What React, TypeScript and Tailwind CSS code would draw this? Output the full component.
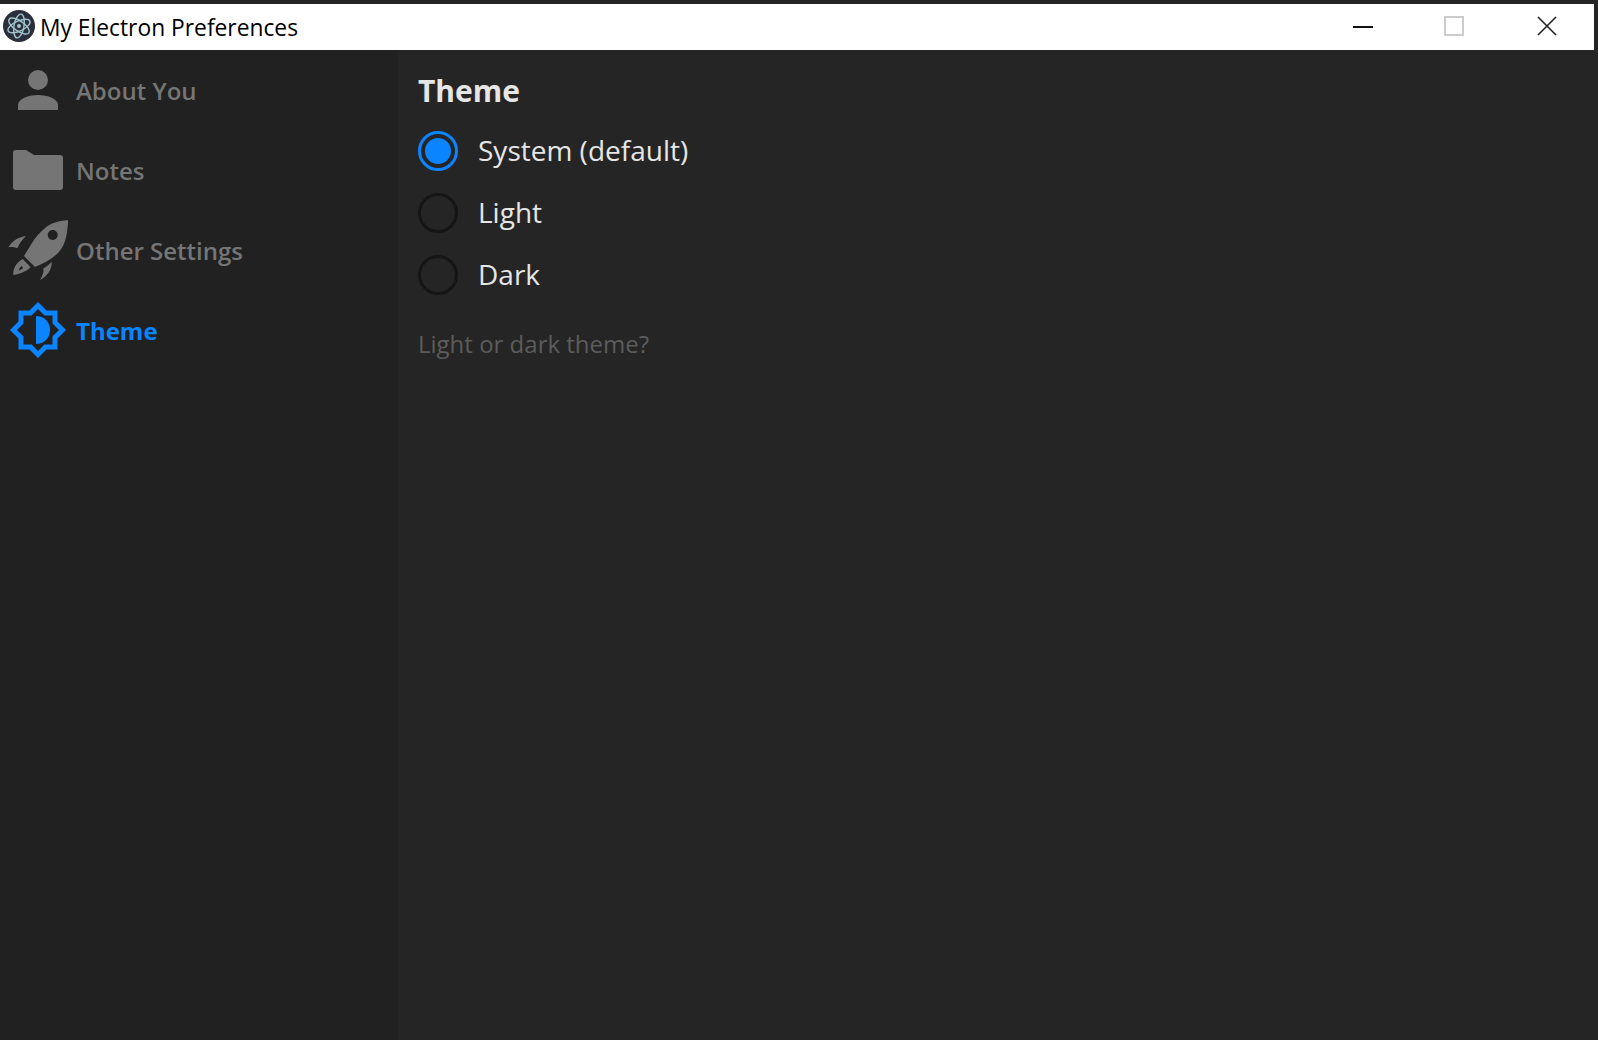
import React from "react";

const navItems = [
  { label: "About You", icon: UserIcon },
  { label: "Notes", icon: FolderIcon },
  { label: "Other Settings", icon: RocketIcon },
  { label: "Theme", icon: ThemeIcon, active: true },
];

const options = [
  { label: "System (default)", checked: true },
  { label: "Light" },
  { label: "Dark" },
];

function UserIcon() {
  return (
    <svg width="60" height="60" viewBox="0 0 60 60" fill="#757575">
      <circle cx="30" cy="20" r="10" />
      <path d="M10 50v-5c0-6 10-10 20-10s20 4 20 10v5z" />
    </svg>
  );
}

function FolderIcon() {
  return (
    <svg width="60" height="60" viewBox="0 0 60 60" fill="#757575">
      <path d="M5 13a3 3 0 0 1 3-3h10l8 5h26a3 3 0 0 1 3 3v29a3 3 0 0 1-3 3H8a3 3 0 0 1-3-3z" />
    </svg>
  );
}

function RocketIcon() {
  return (
    <svg width="60" height="60" viewBox="0 0 60 60" fill="#757575">
      <path
        fillRule="evenodd"
        d="M60.300 0C50 1 42 3 36 9c-5 4-9 9-12 14l-8 13 11 11c8-3 17-8 23-14 7-7 9-16 10.300-33zM44.700 10a5 5 0 1 1 0 10 5 5 0 0 1 0-10z"
      />
      <path d="M0.300 27.300C5 20 11 17 18 16c-4 4-7 8-8.700 12.300-3-1.300-6-1.500-9-1z" />
      <path
        fillRule="evenodd"
        d="M5.300 55C5 48 8 43 14.700 39l8 8.300C19 51 13 54 5.300 55zM13.700 46c-1.500 1-2.500 2.500-3 4.500 1.500-.4 3-1.200 4.300-2.500z"
      />
      <path d="M43.700 41.700C44 50 39 56 32 60c3-5 4-8 3.300-11.700 3-1.300 5.700-3.800 8.400-6.600z" />
    </svg>
  );
}

function ThemeIcon() {
  return (
    <svg width="60" height="60" viewBox="0 0 60 60">
      <path
        d="M30 5.500l7.500 7.500h9.500v9.500l7.500 7.500-7.500 7.500v9.500h-9.500l-7.500 7.500-7.500-7.500H13v-9.500L5.500 30l7.500-7.500V13h9.500z"
        fill="none"
        stroke="#0a84ff"
        strokeWidth="5"
      />
      <path d="M28 16c8 0 14 6 14 14s-6 14-14 14z" fill="#0a84ff" />
    </svg>
  );
}

function ElectronLogo() {
  return (
    <svg width="32" height="32" viewBox="0 0 32 32" fill="none">
      <circle cx="16" cy="16" r="16" fill="#2b2e3b" />
      <g stroke="#9fc4cc" strokeWidth="1.4">
        <ellipse cx="16" cy="16" rx="12" ry="5" transform="rotate(35 16 16)" />
        <ellipse cx="16" cy="16" rx="12" ry="5" transform="rotate(100 16 16)" />
        <ellipse cx="16" cy="16" rx="12" ry="5" transform="rotate(155 16 16)" />
      </g>
      <circle cx="16" cy="16" r="2" fill="#9fc4cc" />
    </svg>
  );
}

export default function App() {
  return (
    <div className="h-[1040px] w-[1598px] overflow-hidden bg-[#252525] font-['Open_Sans',sans-serif] pt-1 pr-1">
      {/* Title bar */}
      <div className="flex h-[46px] items-center bg-white">
        <div className="mb-[2px] ml-[3px]">
          <ElectronLogo />
        </div>
        <span className="ml-[5px] mt-[3px] text-[22.8px] text-black">My Electron Preferences</span>
        <div className="mb-[2px] ml-auto flex items-center">
          <svg width="20" height="20" viewBox="0 0 20 20" className="mr-[71px]">
            <rect x="0" y="10" width="20" height="2" fill="#111" />
          </svg>
          <div className="mr-[73px] h-5 w-5 border-2 border-[#cccccc]" />
          <svg width="20" height="20" viewBox="0 0 20 20" className="mr-[37px]">
            <path d="M1 1l18 18M19 1L1 19" stroke="#222" strokeWidth="1.6" />
          </svg>
        </div>
      </div>

      <div className="flex h-[990px]">
        {/* Sidebar */}
        <nav className="w-[398px] shrink-0 bg-[#212121]">
          {navItems.map((item) => {
            const Icon = item.icon;
            return (
              <div key={item.label} className="flex h-20 items-center pl-2">
                <Icon />
                <span
                  className={`ml-2 mt-[2px] text-2xl ${
                    item.active ? "font-bold text-[#0a84ff]" : "font-semibold text-[#757575]"
                  }`}
                >
                  {item.label}
                </span>
              </div>
            );
          })}
        </nav>

        {/* Content */}
        <main className="flex-1 pl-5 pt-[17px]">
          <h1 className="text-[30px] leading-[48px] font-bold text-[#e6e6e6]">Theme</h1>
          <div className="mt-4 flex flex-col gap-[22px]">
            {options.map((opt) => (
              <label key={opt.label} className="flex h-10 items-center">
                <span
                  className={`flex h-10 w-10 items-center justify-center rounded-full border-[3px] ${
                    opt.checked ? "border-[#0a84ff]" : "border-[#151515]"
                  }`}
                >
                  {opt.checked && <span className="h-[26px] w-[26px] rounded-full bg-[#0a84ff]" />}
                </span>
                <span className="mb-[2px] ml-5 text-[28px] text-[#e6e6e6]">{opt.label}</span>
              </label>
            ))}
          </div>
          <p className="mt-[33px] text-2xl text-[#5c5c5c]">Light or dark theme?</p>
        </main>
      </div>
    </div>
  );
}
